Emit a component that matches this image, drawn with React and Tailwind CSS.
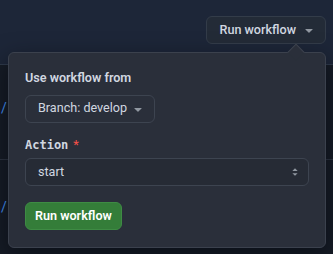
function Caret({ className = '' }) {
  return (
    <svg viewBox="0 0 16 16" width="16" height="16" className={className} fill="currentColor">
      <path d="m4.427 7.427 3.396 3.396a.25.25 0 0 0 .354 0l3.396-3.396A.25.25 0 0 0 11.396 7H4.604a.25.25 0 0 0-.177.427Z" />
    </svg>
  )
}

function UpDown() {
  return (
    <svg viewBox="0 0 16 16" width="12" height="12" fill="currentColor">
      <path d="M4.5 6.5 8 3l3.5 3.5h-7Z" />
      <path d="M4.5 9.5 8 13l3.5-3.5h-7Z" />
    </svg>
  )
}

const sans = "font-['Roboto','Noto_Sans',sans-serif]"

export default function App() {
  return (
    <div className={`relative h-[254px] w-[333px] overflow-hidden bg-[#161c26] ${sans}`}>
      <header className="flex h-[65px] items-start justify-end border-b border-[#2f3a4b] bg-[#1d2638] pr-[7px] pt-[16px]">
        <button
          type="button"
          className="flex h-[28px] items-center gap-[5px] rounded-md border border-[#333c49] bg-[#232b37] pl-[12px] pr-[8px] text-[12.6px] font-medium text-[#d1d7e0]"
        >
          Run workflow
          <Caret className="text-[#9198a1]" />
        </button>
      </header>

      <div className="flex flex-col">
        <div className="flex h-[95px] items-center border-b border-[#2d3441] pb-[8px]">
          <span className="pl-[1px] text-[14px] text-[#4493f8]">/</span>
        </div>
        <div className="flex h-[95px] items-center">
          <span className="pl-[1px] text-[14px] text-[#4493f8]">/</span>
        </div>
      </div>

      <div className="absolute left-[8px] top-[52px] w-[318px] rounded-md border border-[#3b414d] bg-[#2a2f3a] px-[16px] pb-[17px] pt-[16px] shadow-[0_8px_24px_rgba(1,4,9,0.5)]">
        <div className="absolute -top-[7px] right-[23px] h-[12px] w-[12px] rotate-45 border-l border-t border-[#3b414d] bg-[#2a2f3a]" />
        <p className="text-[12.6px] font-semibold text-[#d1d7e0]">Use workflow from</p>
        <button
          type="button"
          className="mt-[7px] flex h-[28px] items-center gap-[3px] rounded-md border border-[#3d4450] bg-[#2a2f3a] pl-[12px] pr-[8px] text-[12.6px] text-[#d1d7e0]"
        >
          Branch: develop
          <Caret className="text-[#9198a1]" />
        </button>

        <div className="mt-[12px] flex items-center gap-[5px]">
          <span className="font-['DejaVu_Sans_Mono',monospace] text-[12px] font-bold text-[#d1d7e0]">Action</span>
          <span className="text-[13px] text-[#f85149]">*</span>
        </div>
        <div className="mt-[4px] flex h-[28px] items-center justify-between rounded-md border border-[#3d4450] bg-[#262b35] pl-[12px] pr-[7px] text-[12.6px] text-[#d1d7e0]">
          start
          <span className="text-[#9198a1]">
            <UpDown />
          </span>
        </div>

        <button
          type="button"
          className="mt-[16px] flex h-[28px] items-center rounded-md border border-[#3e8b44] bg-[#347d39] px-[9px] text-[12.6px] font-semibold text-white"
        >
          Run workflow
        </button>
      </div>
    </div>
  )
}
